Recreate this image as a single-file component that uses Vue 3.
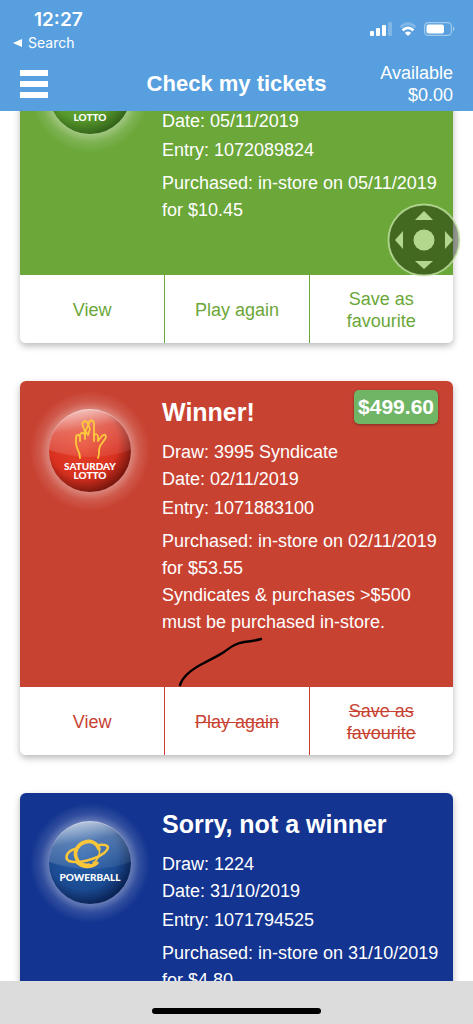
<template>
  <div class="screen">
    <header class="header">
      <div class="status">
        <div class="status-left">
          <span class="time">12:27</span>
          <a class="back" href="#">
            <svg width="9" height="8" viewBox="0 0 9 8" aria-hidden="true"><path d="M0 4 9 0v8z" fill="#fff" /></svg>
            Search
          </a>
        </div>
        <div class="status-icons" aria-hidden="true">
          <svg width="22" height="14" viewBox="0 0 22 14" fill="#fff">
            <rect x="0" y="9" width="4" height="5" rx="1" />
            <rect x="6" y="6" width="4" height="8" rx="1" />
            <rect x="12" y="3" width="4" height="11" rx="1" />
            <rect x="18" y="0" width="4" height="14" rx="1" opacity=".25" />
          </svg>
          <svg width="18" height="14" viewBox="0 0 18 14">
            <path d="M1.5 5.2Q9-1.8 16.5 5.2" fill="none" stroke="#fff" stroke-width="2.8" opacity=".25" />
            <path d="M3.6 8.4Q9 3.4 14.4 8.4" fill="none" stroke="#fff" stroke-width="2.8" />
            <path d="M5.8 11Q9 8.2 12.2 11L9 13.9z" fill="#fff" />
          </svg>
          <svg width="31" height="14" viewBox="0 0 31 14">
            <rect x=".6" y=".6" width="26.8" height="12.8" rx="3.6" fill="none" stroke="#fff" stroke-width="1.2" opacity=".45" />
            <rect x="2.5" y="2.5" width="17.5" height="9" rx="2" fill="#fff" />
            <path d="M29 4.8q3 2.2 0 4.4z" fill="#fff" opacity=".5" />
          </svg>
        </div>
      </div>
      <nav class="nav">
        <button class="menu" type="button" aria-label="Menu">
          <span></span>
          <span></span>
          <span></span>
        </button>
        <h1>Check my tickets</h1>
        <div class="balance">
          <span>Available</span>
          <span>$0.00</span>
        </div>
      </nav>
    </header>

    <main ref="list" class="tickets">
      <article v-for="ticket in tickets" :key="ticket.entry" class="card" :class="ticket.theme">
        <div class="card-body">
          <svg class="ball" width="142" height="142" viewBox="0 0 142 142" aria-hidden="true">
            <defs>
              <radialGradient :id="ticket.theme + '-glow'">
                <stop offset=".68" stop-color="#fff" stop-opacity=".36" />
                <stop offset=".82" stop-color="#fff" stop-opacity=".13" />
                <stop offset="1" stop-color="#fff" stop-opacity="0" />
              </radialGradient>
              <radialGradient :id="ticket.theme + '-fill'" cx=".42" cy=".4" r=".64">
                <stop offset="0" :stop-color="ticket.ball[0]" />
                <stop offset=".66" :stop-color="ticket.ball[1]" />
                <stop offset="1" :stop-color="ticket.ball[2]" />
              </radialGradient>
              <linearGradient :id="ticket.theme + '-shine'" x1=".2" y1="0" x2=".5" y2="1">
                <stop offset="0" stop-color="#fff" stop-opacity=".78" />
                <stop offset=".45" stop-color="#fff" stop-opacity=".24" />
                <stop offset="1" stop-color="#fff" stop-opacity=".08" />
              </linearGradient>
            </defs>
            <circle cx="70" cy="70" r="60" :fill="`url(#${ticket.theme}-glow)`" />
            <circle cx="70" cy="70" r="41" :fill="`url(#${ticket.theme}-fill)`" />
            <path d="M29 69A41 41 0 0 1 111 69Q70 83 29 69z" :fill="`url(#${ticket.theme}-shine)`" />

            <g v-if="ticket.theme === 'powerball'" fill="none" stroke="#fbc638" stroke-linecap="round">
              <path d="M79 56C77 50 71 47 65 49C58 51 54 58 56 64C58 70 63 73 69 72" stroke-width="3.6" />
              <path d="M79 55C81 61 78 67 73 70" stroke-width="1.6" />
              <path d="M57 69C62 75 71 75 77 70" stroke-width="3.4" />
              <path d="M55 56C47 58 44 65 49 68C57 71 75 67 84 60C91 54 88 51 79 52" stroke-width="2.6" />
            </g>
            <g v-else fill="none" stroke="#fdc93c" stroke-width="1.8" stroke-linecap="round" stroke-linejoin="round">
              <path d="M60 77C60 70 56 68 56 62V57C56 53 60 53 60 57V60M60 57V54C61 51 64 51 65 54V58" />
              <path d="M65 54V51L62.500 44C62 40 66 39 67.500 42L70 48L68 54L65.500 50L69 42C70 38 74 39 74 43V60" />
              <path d="M74 55C75 52 78 53 78 56V60L82 55C85 52 87 55 85 58L80 65C78 70 80 72 78 77" />
            </g>
            <text
              v-for="(line, i) in ticket.logo"
              :key="line"
              x="70"
              :y="(ticket.theme === 'powerball' ? 88 : 89) + i * 9"
              class="ball-text"
            >{{ line }}</text>
          </svg>

          <div class="info">
            <h2>{{ ticket.title }}</h2>
            <p>Draw: {{ ticket.draw }}</p>
            <p>Date: {{ ticket.date }}</p>
            <p class="entry">Entry: {{ ticket.entry }}</p>
            <p class="purchased">Purchased: in-store on {{ ticket.date }} for {{ ticket.price }}</p>
            <p v-if="ticket.note">{{ ticket.note }}</p>
          </div>

          <strong v-if="ticket.prize" class="prize">{{ ticket.prize }}</strong>
          <svg v-if="ticket.note" class="pen" width="86" height="50" viewBox="0 0 86 50" aria-hidden="true">
            <path d="M2 48C5 39 16 31 26 26C33 22 40 19 46 15C53 10 56 7 66 5Q76 4 83 2" fill="none" stroke="#000" stroke-width="2.4" stroke-linecap="round" />
          </svg>
        </div>
        <div class="actions">
          <button type="button">View</button>
          <button type="button" :class="{ struck: ticket.note }">Play again</button>
          <button type="button" :class="{ struck: ticket.note }">Save as favourite</button>
        </div>
      </article>
    </main>

    <footer class="home"><span></span></footer>

    <button class="joystick" type="button" aria-label="Scroll control">
      <svg width="74" height="74" viewBox="0 0 74 74">
        <circle cx="37" cy="37" r="35.5" fill-opacity=".42" stroke="#c8e6a8" stroke-opacity=".75" stroke-width="2" fill="#0c1400" />
        <g fill="#c4e69c" fill-opacity=".88">
          <circle cx="37" cy="37" r="10.5" />
          <path d="M37 8 46 17H28z" />
          <path d="M37 66 46 58H28z" />
          <path d="M8 37 16 28V46z" />
          <path d="M66 37 58 28V46z" />
        </g>
      </svg>
    </button>
  </div>
</template>

<script setup>
import { onMounted, ref } from 'vue'

const list = ref(null)

const tickets = [
  {
    theme: 'lotto',
    title: 'Sorry, not a winner',
    draw: '3996',
    date: '05/11/2019',
    entry: '1072089824',
    price: '$10.45',
    logo: ['', 'LOTTO'],
    ball: ['#7cb84a', '#589a2c', '#2f5c18'],
  },
  {
    theme: 'saturday',
    title: 'Winner!',
    draw: '3995 Syndicate',
    date: '02/11/2019',
    entry: '1071883100',
    price: '$53.55',
    note: 'Syndicates & purchases >$500 must be purchased in-store.',
    prize: '$499.60',
    logo: ['SATURDAY', 'LOTTO'],
    ball: ['#e8452c', '#d8301f', '#6b130c'],
  },
  {
    theme: 'powerball',
    title: 'Sorry, not a winner',
    draw: '1224',
    date: '31/10/2019',
    entry: '1071794525',
    price: '$4.80',
    logo: ['POWERBALL'],
    ball: ['#2660ab', '#1b4b92', '#071d4c'],
  },
]

onMounted(() => {
  list.value.scrollTop = 108
})
</script>

<style>
body {
  margin: 0;
  background: #fff;
}
</style>

<style scoped>
.screen {
  display: flex;
  flex-direction: column;
  height: 100vh;
  overflow: hidden;
  font-family: 'Liberation Sans', Arial, sans-serif;
  font-size: 18px;
  color: #fff;
}

button {
  font: inherit;
  border: 0;
  padding: 0;
  background: none;
  cursor: pointer;
}

.header {
  flex: none;
  background: #579fde;
}

.status {
  display: flex;
  justify-content: space-between;
  height: 56px;
  padding: 0 18px 0 13px;
  box-sizing: border-box;
  font-family: Inter, sans-serif;
}

.status-left {
  display: flex;
  flex-direction: column;
  padding-top: 9px;
}

.time {
  padding-left: 21px;
  font-size: 19px;
  font-weight: 600;
  line-height: 22px;
}

.back {
  display: flex;
  align-items: center;
  gap: 6px;
  color: #fff;
  font-size: 14px;
  line-height: 24px;
  text-decoration: none;
}

.status-icons {
  display: flex;
  gap: 7px;
  padding-top: 22px;
}

.nav {
  display: grid;
  grid-template-columns: 1fr auto 1fr;
  align-items: center;
  height: 55px;
  padding: 0 20px;
}

.menu {
  display: flex;
  flex-direction: column;
  gap: 5px;
  width: 28px;
}

.menu span {
  height: 6px;
  background: #fff;
}

h1 {
  margin: 0;
  font-size: 22px;
}

.balance {
  display: flex;
  flex-direction: column;
  align-items: flex-end;
  line-height: 22px;
}

.tickets {
  flex: 1;
  display: flex;
  flex-direction: column;
  gap: 38px;
  min-height: 0;
  padding: 20px;
  overflow-y: auto;
  scrollbar-width: none;
}

.card {
  flex: none;
  border-radius: 6px;
  box-shadow: 0 3px 7px rgba(0, 0, 0, 0.28);
}

.lotto {
  --theme: #6ba739;
}

.saturday {
  --theme: #c84232;
}

.powerball {
  --theme: #133490;
}

.card-body {
  position: relative;
  display: flex;
  background: var(--theme);
  border-radius: 6px 6px 0 0;
}

.ball {
  flex: none;
}

.ball-text {
  fill: #fff;
  font-family: Lato, sans-serif;
  font-size: 10px;
  font-weight: 900;
  text-anchor: middle;
}

.info {
  flex: 1;
  padding: 14px 12px 51px 0;
  line-height: 27px;
}

h2 {
  margin: 0 0 10px;
  font-size: 25px;
  line-height: 34px;
}

p {
  margin: 0;
}

.entry {
  margin-top: 2px;
}

.purchased {
  margin-top: 6px;
}

.prize {
  position: absolute;
  top: 9px;
  right: 15px;
  padding: 0 4px;
  border-radius: 5px;
  background: #70b566;
  box-shadow: 0 1px 3px rgba(0, 0, 0, 0.35);
  font-size: 21px;
  line-height: 34px;
}

.pen {
  position: absolute;
  left: 158px;
  bottom: 0;
}

.actions {
  display: grid;
  grid-template-columns: repeat(3, 1fr);
  height: 68px;
  background: #fff;
  border-radius: 0 0 6px 6px;
}

.actions button {
  padding: 2px 24px 0;
  color: var(--theme);
  line-height: 22px;
}

.actions button + button {
  border-left: 1px solid var(--theme);
}

.struck {
  text-decoration: line-through;
}

.home {
  flex: none;
  display: flex;
  justify-content: center;
  align-items: center;
  height: 43px;
  padding-top: 16px;
  box-sizing: border-box;
  background: #dcdcdc;
}

.home span {
  width: 169px;
  height: 6px;
  border-radius: 3px;
  background: #000;
}

.joystick {
  position: fixed;
  top: 203px;
  right: 12px;
  line-height: 0;
}
</style>
